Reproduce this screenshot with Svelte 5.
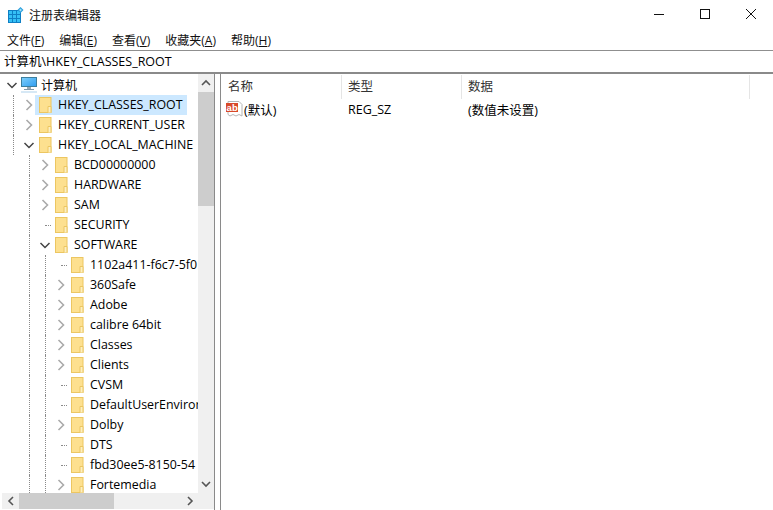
<script>
  const rows = [
    { d: 1, e: 'r', t: 'HKEY_CLASSES_ROOT', sel: true, g: [] },
    { d: 1, e: 'r', t: 'HKEY_CURRENT_USER', g: [] },
    { d: 1, e: 'd', t: 'HKEY_LOCAL_MACHINE', g: [] },
    { d: 2, e: 'r', t: 'BCD00000000', g: [1] },
    { d: 2, e: 'r', t: 'HARDWARE', g: [1] },
    { d: 2, e: 'r', t: 'SAM', g: [1] },
    { d: 2, e: 'n', t: 'SECURITY', g: [1] },
    { d: 2, e: 'd', t: 'SOFTWARE', g: [1] },
    { d: 3, e: 'n', t: '1102a411-f6c7-5f0', g: [1, 2] },
    { d: 3, e: 'r', t: '360Safe', g: [1, 2] },
    { d: 3, e: 'r', t: 'Adobe', g: [1, 2] },
    { d: 3, e: 'r', t: 'calibre 64bit', g: [1, 2] },
    { d: 3, e: 'r', t: 'Classes', g: [1, 2] },
    { d: 3, e: 'r', t: 'Clients', g: [1, 2] },
    { d: 3, e: 'n', t: 'CVSM', g: [1, 2] },
    { d: 3, e: 'n', t: 'DefaultUserEnviror', g: [1, 2] },
    { d: 3, e: 'r', t: 'Dolby', g: [1, 2] },
    { d: 3, e: 'n', t: 'DTS', g: [1, 2] },
    { d: 3, e: 'n', t: 'fbd30ee5-8150-54', g: [1, 2] },
    { d: 3, e: 'r', t: 'Fortemedia', g: [1, 2] }
  ];
  const menus = [['文件(', 'F', ')'], ['编辑(', 'E', ')'], ['查看(', 'V', ')'], ['收藏夹(', 'A', ')'], ['帮助(', 'H', ')']];
</script>

<div class="win">
  <header class="title">
    <svg class="appicon" width="16" height="16" viewBox="0 0 16 16">
      <rect x="0" y="3" width="13" height="13" fill="#0f7fc4"/>
      <path d="M1 4h3v3H1zM5 4h3v3H5zM9 4h3v3H9zM1 8h3v3H1zM5 8h3v3H5zM9 8h3v3H9zM1 12h3v3H1zM5 12h3v3H5zM9 12h3v3H9z" fill="#35c0f5"/>
      <path d="M12.500 0l3 3-3 3-3-3z" fill="#2a9fdc"/>
      <path d="M12.500 1.600l1.400 1.400-1.400 1.400-1.400-1.400z" fill="#9fe0fa"/>
    </svg>
    <span class="ttext">注册表编辑器</span>
    <div class="caption">
      <svg width="46" height="29" viewBox="0 0 46 29"><path d="M18 14.500h10" stroke="#111" fill="none"/></svg>
      <svg width="46" height="29" viewBox="0 0 46 29"><rect x="18.500" y="9.500" width="9" height="9" stroke="#111" fill="none"/></svg>
      <svg width="46" height="29" viewBox="0 0 46 29"><path d="M18 9l10 10M28 9L18 19" stroke="#111" fill="none"/></svg>
    </div>
  </header>

  <nav class="menu">
    {#each menus as m}
      <span class="mi">{m[0]}<u>{m[1]}</u>{m[2]}</span>
    {/each}
  </nav>

  <div class="addr">计算机\HKEY_CLASSES_ROOT</div>

  <div class="main">
    <section class="treepane">
      <div class="treewrap">
        <div class="tree">
          <div class="row root">
            <svg class="chev" width="12" height="12" viewBox="0 0 12 12"><path d="M1.500 4l4.500 4.500 4.500-4.500" stroke="#444" stroke-width="1.500" fill="none"/></svg>
            <svg class="pc" width="18" height="18" viewBox="0 0 18 18">
              <defs>
                <linearGradient id="scr" x1="0" y1="0" x2="1" y2="1">
                  <stop offset="0" stop-color="#7fd0fb"/>
                  <stop offset="1" stop-color="#2f9cf0"/>
                </linearGradient>
              </defs>
              <rect x="1.500" y="1.500" width="15" height="9" fill="url(#scr)" stroke="#3d7f9e"/>
              <rect x="7" y="11" width="4" height="2" fill="#9aa9b3"/>
              <rect x="4" y="13" width="10" height="1" fill="#7f97a8"/>
              <rect x="1" y="15" width="16" height="2" fill="#d6e8f5"/>
            </svg>
            <span class="rt">计算机</span>
          </div>
          {#each rows as r}
            <div class="row" style="padding-left:{(r.d - 1) * 16 + 22}px">
              {#each r.g as g}
                <i class="vguide" style="left:{g * 16 + 13}px"></i>
              {/each}
              {#if r.d === 1}<i class="vguide" style="left:13px"></i>{/if}
              <span class="exp">
                {#if r.e === 'r'}
                  <svg width="12" height="12" viewBox="0 0 12 12"><path d="M3.500 1l5 5-5 5" stroke="#aaa" stroke-width="1.600" fill="none"/></svg>
                {:else if r.e === 'd'}
                  <svg width="12" height="12" viewBox="0 0 12 12"><path d="M1.500 4l4.500 4.500 4.500-4.500" stroke="#444" stroke-width="1.500" fill="none"/></svg>
                {:else}
                  <i class="hguide"></i>
                {/if}
              </span>
              <span class="item" class:sel={r.sel}>
                <svg class="folder" width="15" height="18" viewBox="0 0 15 18">
                  <rect x="1.500" y="1.500" width="11.500" height="15" fill="#fde08f" stroke="#ecc661"/>
                  <path d="M10 16.500v-6h3v6" fill="#fdefc2" stroke="#ecc661"/>
                </svg>
                <span class="lbl">{r.t}</span>
              </span>
            </div>
          {/each}
        </div>
        <div class="vbar">
          <span class="arrow"><svg width="10" height="10" viewBox="0 0 10 10"><path d="M1 7l4-4 4 4" stroke="#555" stroke-width="1.600" fill="none"/></svg></span>
          <div class="vtrack"><div class="vthumb"></div></div>
          <span class="arrow"><svg width="10" height="10" viewBox="0 0 10 10"><path d="M1 3l4 4 4-4" stroke="#555" stroke-width="1.600" fill="none"/></svg></span>
        </div>
      </div>
      <div class="hbar">
        <span class="harrow"><svg width="10" height="10" viewBox="0 0 10 10"><path d="M7 1L3 5l4 4" stroke="#555" stroke-width="1.600" fill="none"/></svg></span>
        <div class="htrack"><div class="hthumb"></div></div>
        <span class="harrow"><svg width="10" height="10" viewBox="0 0 10 10"><path d="M3 1l4 4-4 4" stroke="#555" stroke-width="1.600" fill="none"/></svg></span>
        <span class="corner"></span>
      </div>
    </section>

    <section class="list">
      <div class="lhead">
        <span class="c1">名称</span>
        <span class="c2">类型</span>
        <span class="c3">数据</span>
      </div>
      <div class="lrow">
        <span class="c1 namecell">
          <svg width="18" height="18" viewBox="0 0 18 18">
            <path d="M3 1.500h11l3 3v11.500l-3-1.500-3 1.500-3-1.500-3 1.500-2-1.500z" fill="#fff" stroke="#b5b5b5"/>
            <rect x="1" y="3" width="12" height="9" fill="#d8492a"/>
            <text x="1.600" y="10.500" class="ab">ab</text>
          </svg>
          <span>(默认)</span>
        </span>
        <span class="c2">REG_SZ</span>
        <span class="c3">(数值未设置)</span>
      </div>
    </section>
  </div>
</div>

<style>
  :global(body) { margin: 0; background: #fff; }
  .win {
    width: 773px; height: 510px; overflow: hidden; display: flex; flex-direction: column;
    font-family: "Open Sans", "Noto Sans CJK SC", sans-serif; font-size: 12.500px; color: #000; background: #fff;
  }
  .title { height: 29px; display: flex; align-items: center; padding-left: 8px; }
  .appicon { margin-right: 5px; }
  .ttext { font-size: 12px; color: #111; }
  .caption { margin-left: auto; display: flex; margin-right: -1px; }
  .caption svg { display: block; }
  .menu { height: 21px; display: flex; align-items: center; padding-left: 7px; gap: 15px; box-sizing: border-box; font-size: 12px; }
  .mi { white-space: nowrap; color: #111; }
  .addr {
    height: 24px; box-sizing: border-box; border-top: 1px solid #8f8f8f; border-bottom: 2px solid #8a8a8a;
    padding-left: 4px; line-height: 21px; white-space: nowrap;
  }
  .main { flex: 1; display: flex; min-height: 0; }
  .treepane {
    width: 214px; flex: none; display: flex; flex-direction: column; border-right: 1px solid #8a8a8a;
  }
  .treewrap { flex: 1; display: flex; min-height: 0; }
  .tree { width: 198px; overflow: hidden; box-sizing: border-box; }
  .row { height: 20px; display: flex; align-items: center; position: relative; white-space: nowrap; box-sizing: border-box; }
  .root { padding-left: 6px; height: 22px; margin-bottom: -1px; }
  .chev { margin-right: 2px; }
  .pc { margin-right: 3px; }
  .rt { font-size: 12px; }
  .vguide { position: absolute; top: 0; bottom: 0; border-left: 1px dotted #8a8a8a; }
  .exp { width: 13px; height: 20px; display: flex; align-items: center; justify-content: center; position: relative; flex: none; background: #fff; }
  .hguide { position: absolute; left: 7px; width: 8px; top: 10px; border-top: 1px dotted #8a8a8a; }
  .item { display: flex; align-items: center; height: 20px; padding: 0 4px 0 3px; position: relative; background: #fff; }
  .item.sel { background: #cce8ff; }
  .folder { margin-right: 5px; display: block; }
  .lbl { font-size: 12.400px; padding-bottom: 2px; }
  .vbar { width: 16px; background: #f0f0f0; display: flex; flex-direction: column; }
  .arrow { height: 18px; display: flex; align-items: center; justify-content: center; flex: none; }
  .vtrack { flex: 1; }
  .vthumb { height: 114px; background: #cdcdcd; }
  .hbar { height: 16px; margin: 0 0 1px 2px; background: #f0f0f0; display: flex; }
  .harrow { width: 17px; display: flex; align-items: center; justify-content: center; flex: none; }
  .htrack { flex: 1; }
  .hthumb { width: 95px; height: 100%; background: #cdcdcd; }
  .corner { width: 16px; flex: none; }
  .list { flex: 1; margin-left: 5px; border-left: 1px solid #8a8a8a; min-width: 0; }
  .lhead { height: 25px; display: flex; align-items: flex-end; color: #333; }
  .lhead span { height: 24px; line-height: 24px; box-sizing: border-box; border-right: 1px solid #e5e5e5; }
  .c1 { width: 121px; padding-left: 7px; box-sizing: border-box; flex: none; }
  .c2 { width: 120px; padding-left: 6px; box-sizing: border-box; flex: none; }
  .c3 { width: 288px; padding-left: 6px; box-sizing: border-box; flex: none; }
  .lrow { height: 20px; display: flex; align-items: center; }
  .namecell { display: flex; align-items: center; gap: 1px; padding-left: 4px; }
  .ab { font-family: "Liberation Sans", sans-serif; font-size: 9.500px; font-weight: 700; fill: #fff; }
</style>
